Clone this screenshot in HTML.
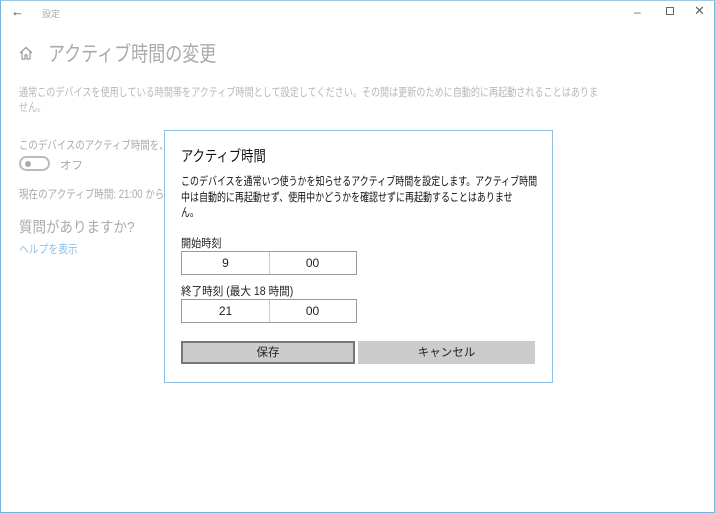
<!DOCTYPE html>
<html><head><meta charset="utf-8"><style>
*{margin:0;padding:0;box-sizing:border-box}
body{width:715px;height:513px;overflow:hidden;background:#fff;font-family:"Liberation Sans","Noto Sans CJK JP",sans-serif;position:relative}
.win{position:absolute;left:0;top:0;width:715px;height:513px;border:1px solid #7ab4dc;border-top-color:#9cc8e6}
.a{position:absolute;white-space:nowrap;transform-origin:0 0}
.g{color:#b8b8b8}
.dlg{position:absolute;left:164px;top:130px;width:389px;height:253px;border:1px solid #8fc0e4;background:#fff}
.box{position:absolute;left:181px;width:176px;height:24px;border:1px solid #9a9a9a;font-size:12px;color:#222}
.box span{position:absolute;top:4px;width:87px;text-align:center}
.box i{position:absolute;left:87px;top:0;height:22px;border-left:1px solid #ccc}
</style></head><body>
<div class="win"></div>
<div class="a" style="left:11px;top:4px;font-size:13px;color:#444">←</div>
<div class="a" style="left:42px;top:7px;font-size:9px;color:#aaa">設定</div>
<div class="a" style="left:634px;top:5px;font-size:12px;color:#666">–</div>
<div class="a" style="left:666px;top:7px;width:8px;height:8px;border:1px solid #666"></div>
<div class="a" style="left:694px;top:3px;font-size:13px;color:#666">✕</div>
<svg class="a" style="left:19px;top:46px" width="14" height="14" viewBox="0 0 14 14"><path d="M1 7 L7 1.5 L13 7 M3 5.5 V13 H6 V9 H8 V13 H11 V5.5" fill="none" stroke="#999" stroke-width="1.2"/></svg>
<div class="a" style="left:48px;top:38px;font-size:21px;color:#aaa;transform:scaleX(0.81)">アクティブ時間の変更</div>
<div class="a g" style="left:19px;top:86px;font-size:11.5px;line-height:15px;transform:scaleX(0.79)">通常このデバイスを使用している時間帯をアクティブ時間として設定してください。その間は更新のために自動的に再起動されることはありま<br>せん。</div>
<div class="a g" style="left:19px;top:137px;font-size:11.5px;color:#aaa;transform:scaleX(0.82)">このデバイスのアクティブ時間を、ア</div>
<div class="a" style="left:19px;top:156px;width:31px;height:15px;border:2px solid #bbb;border-radius:8px"><div style="position:absolute;left:4px;top:3px;width:6px;height:6px;border-radius:3px;background:#aaa"></div></div>
<div class="a g" style="left:60px;top:157px;font-size:11.5px;color:#aaa">オフ</div>
<div class="a g" style="left:19px;top:186px;font-size:11.5px;color:#aaa;transform:scaleX(0.83)">現在のアクティブ時間: 21:00 から</div>
<div class="a g" style="left:19px;top:216px;font-size:15px;color:#aaa;transform:scaleX(0.9)">質問がありますか?</div>
<div class="a" style="left:19px;top:241px;font-size:11.5px;color:#8fc0e8;transform:scaleX(0.85)">ヘルプを表示</div>
<div class="dlg"></div>
<div class="a" style="left:181px;top:145px;font-size:15px;color:#111;transform:scaleX(0.82)">アクティブ時間</div>
<div class="a" style="left:181px;top:174px;font-size:11.6px;line-height:15.5px;color:#111;transform:scaleX(0.775)">このデバイスを通常いつ使うかを知らせるアクティブ時間を設定します。アクティブ時間<br>中は自動的に再起動せず、使用中かどうかを確認せずに再起動することはありませ<br>ん。</div>
<div class="a" style="left:181px;top:235px;font-size:11.5px;color:#222;transform:scaleX(0.88)">開始時刻</div>
<div class="box" style="top:251px"><span style="left:0">9</span><i></i><span style="left:87px">00</span></div>
<div class="a" style="left:181px;top:283px;font-size:11.5px;color:#222;transform:scaleX(0.92)">終了時刻 (最大 18 時間)</div>
<div class="box" style="top:299px"><span style="left:0">21</span><i></i><span style="left:87px">00</span></div>
<div class="a" style="left:181px;top:341px;width:174px;height:23px;background:#ccc;border:2px solid #777;font-size:11.5px;text-align:center;line-height:20px;color:#222">保存</div>
<div class="a" style="left:358px;top:341px;width:177px;height:23px;background:#ccc;font-size:11.5px;text-align:center;line-height:24px;color:#222">キャンセル</div>
</body></html>
